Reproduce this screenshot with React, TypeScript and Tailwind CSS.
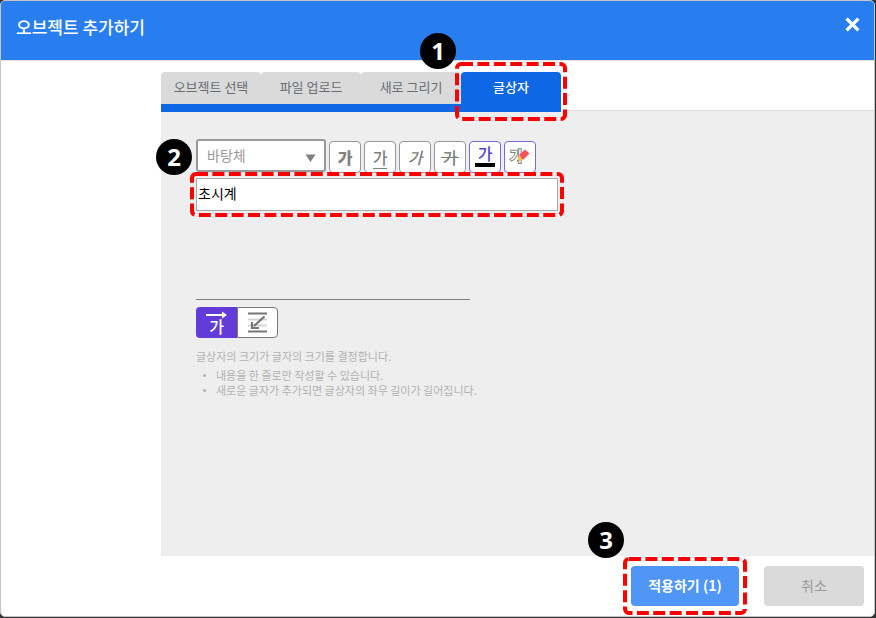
import { useState } from "react";
import type { ReactNode } from "react";

function DashedFrame({ className }: { className: string }) {
  return (
    <div className={`pointer-events-none absolute ${className}`} aria-hidden="true">
      <svg className="block h-full w-full overflow-visible">
        <rect
          x="2"
          y="2"
          rx="4"
          fill="none"
          stroke="#ff0000"
          strokeWidth="4"
          strokeDasharray="12 4.4"
          className="h-[calc(100%-4px)] w-[calc(100%-4px)]"
        />
      </svg>
    </div>
  );
}

function StepBadge({ n, className }: { n: number; className: string }) {
  return (
    <span
      className={`pointer-events-none absolute flex size-9 items-center justify-center rounded-full bg-black font-['Noto_Sans',sans-serif] text-2xl font-bold text-white ${className}`}
    >
      {n}
    </span>
  );
}

function ToolButton({
  label,
  accent = false,
  children,
}: {
  label: string;
  accent?: boolean;
  children: ReactNode;
}) {
  return (
    <button
      type="button"
      aria-label={label}
      className={`flex h-8 w-8 items-center justify-center rounded-[4px] border bg-white text-base leading-6 font-medium ${
        accent ? "border-[#7a68dc] text-[#5b3fd0]" : "border-[#979797] text-[#808080]"
      }`}
    >
      {children}
    </button>
  );
}

const tabs = ["오브젝트 선택", "파일 업로드", "새로 그리기", "글상자"];

export default function App() {
  const [active, setActive] = useState(3);
  const [text, setText] = useState("초시계");

  return (
    <div className="flex min-h-screen flex-col bg-[#333] pr-px pb-px font-['Noto_Sans_CJK_KR',sans-serif]">
      <div className="flex flex-1 flex-col overflow-hidden rounded-[5px] border border-[#c4c4c4] bg-white">
        <header className="flex h-[60px] items-start justify-between border-b border-[#e2e2e2] bg-[#297eef] pt-3 pr-3.5 pl-[15px] text-white">
          <h1 className="text-[17px] leading-7 font-medium">오브젝트 추가하기</h1>
          <button type="button" aria-label="닫기" className="pt-1">
            <svg width="15" height="15" viewBox="0 0 15 15" stroke="#fff" strokeWidth="3.4">
              <path d="M1.6 1.6 13.4 13.4M13.4 1.6 1.6 13.4" />
            </svg>
          </button>
        </header>

        <main className="ml-40 flex flex-1 flex-col pt-[11px]">
          <nav className="relative z-10 flex h-[39px] border-b border-[#ddd]">
            {tabs.map((t, i) => (
              <div key={t} className="relative h-10 w-[100px]">
                <button
                  type="button"
                  onClick={() => setActive(i)}
                  className={`h-full w-full rounded-t-[4px] border-b-8 border-[#0e67e4] pb-0.5 text-[13px] ${
                    i === active ? "bg-[#0e67e4] font-medium text-white" : "bg-[#dadada] text-[#686e75]"
                  }`}
                >
                  {t}
                </button>
                {i === 3 && (
                  <>
                    <DashedFrame className="-inset-x-1.5 -top-[10px] -bottom-[9px]" />
                    <StepBadge n={1} className="-top-[39px] -left-[41px]" />
                  </>
                )}
              </div>
            ))}
          </nav>

          <section className="flex-1 bg-[#eee] px-[35px] pt-7">
            <div className="relative flex h-[34px] w-fit items-end gap-[3px]">
              <StepBadge n={2} className="top-0 -left-10" />
              <div className="relative self-start">
                <select
                  aria-label="글꼴"
                  className="block h-[33px] w-[130px] appearance-none rounded-[3px] border-2 border-[#999] bg-white px-[9px] pb-0.5 text-sm text-[#999]"
                >
                  <option>바탕체</option>
                </select>
                <svg className="pointer-events-none absolute top-[15px] right-2.5" width="11" height="8" viewBox="0 0 11 8">
                  <path d="M0.5 0.5h10L5.5 8z" fill="#808080" />
                </svg>
              </div>
              <ToolButton label="굵게">
                <span className="font-black">가</span>
              </ToolButton>
              <ToolButton label="밑줄">
                <span className="h-6 border-b border-[#808080]">가</span>
              </ToolButton>
              <ToolButton label="기울임">
                <span className="italic">가</span>
              </ToolButton>
              <ToolButton label="취소선">
                <span className="relative px-0.5">
                  가
                  <span className="absolute inset-x-0 top-1/2 h-px bg-[#808080]" />
                </span>
              </ToolButton>
              <ToolButton label="글자색" accent>
                <span className="flex flex-col items-center pb-1">
                  <span className="h-5 leading-5">가</span>
                  <span className="h-1 w-5 bg-black" />
                </span>
              </ToolButton>
              <ToolButton label="배경색" accent>
                <span className="relative flex h-6 w-5 text-sm leading-5 text-white">
                  <span className="[-webkit-text-stroke:2px_#808080] [paint-order:stroke]">가</span>
                  <svg className="absolute top-1 left-1.5" width="14" height="14" viewBox="0 0 14 14">
                    <path d="M3 6 9 0.5 13.5 4.5 7 11z" fill="#f4515f" />
                    <path d="M3 6 7 11 1 12.5z" fill="#f4bd59" />
                    <path d="M1.6 10.5 2.8 12 1 12.5z" fill="#765" />
                  </svg>
                </span>
              </ToolButton>
            </div>

            <div className="relative mt-[5px] w-[362px]">
              <input
                aria-label="글상자 내용"
                value={text}
                onChange={(e) => setText(e.target.value)}
                className="block h-[33px] w-full border border-[#aaa] bg-white px-px pb-1 text-sm text-black outline-none"
              />
              <DashedFrame className="-inset-x-1.5 -inset-y-1.5" />
            </div>

            <hr className="mt-[88px] w-[274px] border-[#808080]" />

            <div className="mt-[7px] flex h-[31px] w-[82px]">
              <button
                type="button"
                aria-label="한 줄 쓰기"
                className="flex w-[41px] flex-col items-center rounded-l-[4px] bg-[#633bd9] pt-1 text-white"
              >
                <svg width="21" height="8" viewBox="0 0 21 8">
                  <path d="M0 4h18" stroke="#fff" strokeWidth="2" />
                  <path d="M16 0.5 21 4 16 7.5z" fill="#fff" />
                </svg>
                <span className="text-base leading-[14px] font-medium">가</span>
              </button>
              <button
                type="button"
                aria-label="여러 줄 쓰기"
                className="flex flex-1 items-center justify-center rounded-r-[4px] border border-[#777] bg-white"
              >
                <svg width="20" height="21" viewBox="0 0 20 21" fill="none">
                  <path d="M0 7.5h19M0 13.5h19" stroke="#d5d5d5" strokeWidth="2" />
                  <path d="M0 1.5h19M0 19.5h19" stroke="#777" strokeWidth="2" />
                  <path d="M16.5 4.5 6 14" stroke="#777" strokeWidth="2.2" />
                  <path d="M4 10v6h7" stroke="#777" strokeWidth="2.2" />
                </svg>
              </button>
            </div>

            <p className="mt-2.5 text-[11px] leading-4 text-[#b2b2b2]">글상자의 크기가 글자의 크기를 결정합니다.</p>
            <ul className="mt-1 text-[11px] leading-[15px] text-[#b2b2b2]">
              <li className="flex items-center">
                <span className="mr-2.5 ml-[7px] size-[3px] rounded-full bg-[#b2b2b2]" />
                내용을 한 줄로만 작성할 수 있습니다.
              </li>
              <li className="flex items-center">
                <span className="mr-2.5 ml-[7px] size-[3px] rounded-full bg-[#b2b2b2]" />
                새로운 글자가 추가되면 글상자의 좌우 길이가 길어집니다.
              </li>
            </ul>
          </section>
        </main>

        <footer className="flex h-[60px] items-center justify-end gap-[25px] pr-2.5">
          <div className="relative">
            <button type="button" className="block h-10 w-[108px] rounded-[4px] bg-[#4f96f6] pb-0.5 text-sm font-bold text-white">
              적용하기 (1)
            </button>
            <DashedFrame className="-inset-x-2 -inset-y-[9px]" />
            <StepBadge n={3} className="-top-11 -left-[43px]" />
          </div>
          <button type="button" className="h-10 w-[100px] rounded-[4px] bg-[#dadada] pb-0.5 text-sm text-[#999]">
            취소
          </button>
        </footer>
      </div>
    </div>
  );
}
